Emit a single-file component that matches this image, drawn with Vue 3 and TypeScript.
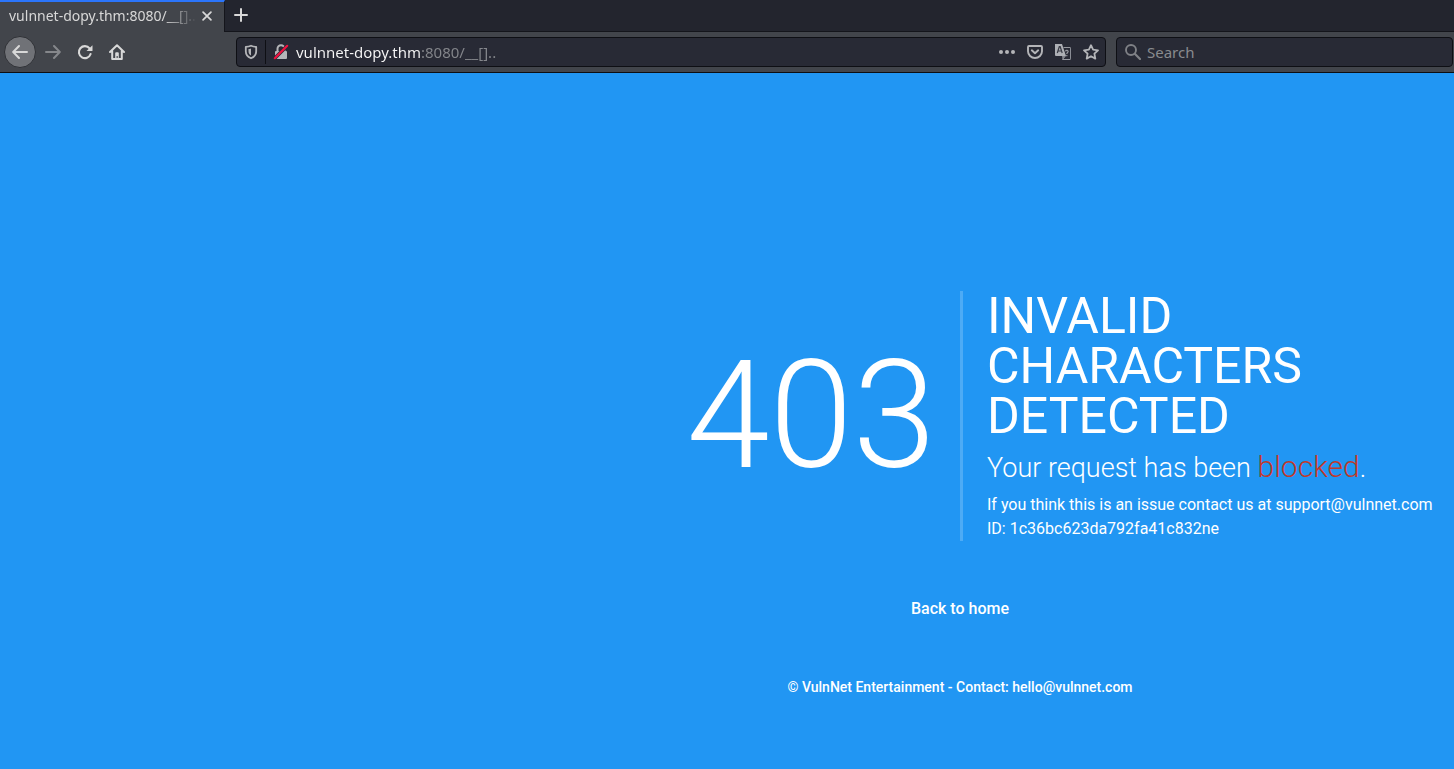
<script setup lang="ts">
import { ref } from 'vue'

const tabTitle = 'vulnnet-dopy.thm:8080/__[]..'
const address = ref('vulnnet-dopy.thm:8080/__[]..')
const query = ref('')
const requestId = '1c36bc623da792fa41c832ne'
</script>

<template>
  <div class="browser">
    <div class="tab-strip" role="tablist">
      <div class="tab" role="tab" aria-selected="true">
        <span class="tab-title">{{ tabTitle }}</span>
        <button class="tab-close" type="button" aria-label="Close tab">
          <svg width="14" height="14" viewBox="0 0 16 16"><path d="M3.500 3.500l9 9M12.500 3.500l-9 9" stroke="currentColor" stroke-width="2" stroke-linecap="round" /></svg>
        </button>
      </div>
      <button class="new-tab" type="button" aria-label="New tab">
        <svg width="16" height="16" viewBox="0 0 16 16"><path d="M8 2v12M2 8h12" stroke="currentColor" stroke-width="2" stroke-linecap="round" /></svg>
      </button>
    </div>

    <div class="toolbar">
      <nav class="nav-buttons" aria-label="Navigation">
        <button class="nav back" type="button" aria-label="Back">
          <svg width="16" height="16" viewBox="0 0 16 16"><path d="M15 8H1.500M7 2L1.200 8 7 14" fill="none" stroke="currentColor" stroke-width="2" stroke-linecap="round" stroke-linejoin="round" /></svg>
        </button>
        <button class="nav" type="button" aria-label="Forward" disabled>
          <svg width="16" height="16" viewBox="0 0 16 16"><path d="M1 8h13.500M9 2l5.800 6L9 14" fill="none" stroke="currentColor" stroke-width="2" stroke-linecap="round" stroke-linejoin="round" /></svg>
        </button>
        <button class="nav" type="button" aria-label="Reload">
          <svg width="16" height="16" viewBox="0 0 16 16"><path d="M12.600 4.400A6 6 0 1 0 13.600 10" fill="none" stroke="currentColor" stroke-width="2.100" stroke-linecap="round" /><path d="M15.500 1.200v5.300a.6.600 0 0 1-.6.600H9.500z" fill="currentColor" /></svg>
        </button>
        <button class="nav" type="button" aria-label="Home">
          <svg width="16" height="16" viewBox="0 0 16 16"><path d="M1 8l7-6.800L15 8M3.200 7v7.900h9.600V7" fill="none" stroke="currentColor" stroke-width="2" stroke-linecap="round" stroke-linejoin="round" /><path d="M6.200 15V9.200a1 1 0 0 1 1-1h1.600a1 1 0 0 1 1 1V15H8.700v-3H7.600v3z" fill="currentColor" /></svg>
        </button>
      </nav>

      <div class="field address">
        <button class="icon shield" type="button" aria-label="Tracking protection">
          <svg width="16" height="16" viewBox="0 0 16 16"><path d="M8 1.700c1.700.8 3.500 1.100 5.200 1.200v4.300c0 3.100-2 5.700-5.200 7.100-3.200-1.400-5.200-4-5.200-7.100V2.900C4.500 2.800 6.300 2.500 8 1.700z" fill="none" stroke="currentColor" stroke-width="1.800" stroke-linejoin="round" /><path d="M8 4.400v7.200C6.300 10.500 5.500 9 5.500 7V5.100C6.300 5 7.200 4.700 8 4.400z" fill="currentColor" /></svg>
        </button>
        <button class="icon lock" type="button" aria-label="Connection not secure">
          <svg width="16" height="16" viewBox="0 0 16 16"><path d="M4.500 8V4.800a3.500 3.500 0 0 1 7 0V8" fill="none" stroke="currentColor" stroke-width="2" /><rect x="2" y="7" width="12" height="8" rx="1" fill="currentColor" /><path d="M1.500 14.500l13-13" stroke="#282a35" stroke-width="3.600" /><path d="M1.800 14.200L14.200 1.800" stroke="#f2113f" stroke-width="2.200" stroke-linecap="round" /></svg>
        </button>
        <input v-model="address" class="url-input" type="text" aria-label="Address" spellcheck="false" />
        <div class="actions">
          <button class="icon" type="button" aria-label="Page actions">
            <svg width="16" height="16" viewBox="0 0 16 16" fill="currentColor"><circle cx="2" cy="8" r="2" /><circle cx="8" cy="8" r="2" /><circle cx="14" cy="8" r="2" /></svg>
          </button>
          <button class="icon" type="button" aria-label="Save to Pocket">
            <svg width="16" height="16" viewBox="0 0 16 16" fill="none" stroke="currentColor" stroke-width="1.900" stroke-linecap="round" stroke-linejoin="round"><path d="M2 2h12a1 1 0 0 1 1 1v4.200a7 6.800 0 0 1-14 0V3a1 1 0 0 1 1-1z" /><path d="M4.800 6.300L8 9.300l3.200-3" /></svg>
          </button>
          <button class="icon" type="button" aria-label="Translate page">
            <svg width="16" height="16" viewBox="0 0 16 16"><path d="M0 0h7l4 12H1a1 1 0 0 1-1-1z" fill="#aeb0b5" /><path d="M2.300 9l2-6.300h.9l2 6.300M3 7h3.500" fill="none" stroke="#393b45" stroke-width="1.200" /><path d="M8.500 3.500H15a.6.600 0 0 1 .6.600v10.800a.6.600 0 0 1-.6.600H7.500l2.800-3.500" fill="none" stroke="#96989f" stroke-width="1" /><path d="M7 12h3.600l-3 3.500z" fill="#85878e" /><path d="M10.500 7.300c.3-1.400 3-1 2.600.4-.2.800-1.300 1-1.300 2.300M11.800 11v1.200" fill="none" stroke="#96989f" stroke-width="1.200" /></svg>
          </button>
          <button class="icon" type="button" aria-label="Bookmark this page">
            <svg width="16" height="16" viewBox="0 0 16 16"><path d="M8 1.200l2.100 4.500 4.900.6-3.600 3.400.9 4.900L8 12.200l-4.300 2.400.9-4.900L1 6.300l4.900-.6z" fill="none" stroke="currentColor" stroke-width="1.800" stroke-linejoin="round" /></svg>
          </button>
        </div>
      </div>

      <label class="field search">
        <svg width="16" height="16" viewBox="0 0 16 16"><circle cx="6" cy="6" r="5" fill="none" stroke="currentColor" stroke-width="1.900" /><path d="M9.800 9.800L15 15" stroke="currentColor" stroke-width="2.200" stroke-linecap="round" /></svg>
        <input v-model="query" class="search-input" type="text" aria-label="Search" placeholder="Search" />
      </label>
    </div>

    <main class="page">
      <section class="error">
        <div class="code">403</div>
        <div class="details">
          <h1>Invalid<br />characters<br />detected</h1>
          <h2>Your request has been <span class="blocked">blocked</span>.</h2>
          <p>If you think this is an issue contact us at support@vulnnet.com</p>
          <p>ID: {{ requestId }}</p>
        </div>
      </section>
      <a class="home" href="#">Back to home</a>
      <footer>© VulnNet Entertainment - Contact: hello@vulnnet.com</footer>
    </main>
  </div>
</template>

<style>
body {
  margin: 0;
  background: #2196f3;
}
</style>

<style scoped>
.browser {
  min-height: 100vh;
  display: flex;
  flex-direction: column;
  font-family: "Noto Sans", sans-serif;
  font-size: 15px;
  overflow: hidden;
}
button {
  display: flex;
  align-items: center;
  justify-content: center;
  padding: 0;
  border: 0;
  background: none;
  color: inherit;
}
svg {
  display: block;
  flex: none;
}
input {
  flex: 1;
  min-width: 0;
  padding: 0;
  border: 0;
  outline: 0;
  background: none;
  font: inherit;
}
.tab-strip {
  display: flex;
  height: 32px;
  background: #23252e;
  box-shadow: inset 0 -1px #14151b;
  color: #d8d8d8;
}
.tab {
  box-sizing: border-box;
  width: 225px;
  display: flex;
  align-items: center;
  padding: 0 9px 2px;
  border-top: 2px solid #2b75fb;
  border-right: 1px solid #14151b;
  background: #42454b;
}
.tab-title {
  flex: 1;
  overflow: hidden;
  white-space: nowrap;
  font-size: 14px;
  line-height: 20px;
  mask-image: linear-gradient(to right, #000 155px, transparent 188px);
}
.tab-close {
  width: 16px;
  height: 16px;
  margin-left: 4px;
}
.new-tab {
  width: 32px;
  height: 30px;
}
.toolbar {
  box-sizing: border-box;
  height: 41px;
  display: flex;
  align-items: center;
  gap: 10px;
  padding: 0 1px 0 4px;
  background: #42454b;
  border-bottom: 1px solid #0d0e12;
  color: #d8d8d8;
}
.nav-buttons {
  display: flex;
  align-items: center;
  width: 222px;
}
.nav {
  width: 32px;
  height: 32px;
}
.nav:disabled {
  color: #85878b;
}
.back {
  box-sizing: border-box;
  margin-right: 1px;
  border: 1px solid #2f3136;
  border-radius: 50%;
  background: #707277;
}
.field {
  box-sizing: border-box;
  height: 30px;
  display: flex;
  align-items: center;
  border: 1px solid #0e0f14;
  border-radius: 4px;
  background: #282a35;
}
.address {
  flex: 856;
  padding: 0 6px;
  color: #b4b5b8;
}
.shield {
  width: 23px;
  height: 24px;
  padding-right: 6px;
  border-right: 1px solid #0e0f14;
}
.lock {
  width: 30px;
  height: 24px;
}
.url-input {
  background: linear-gradient(to right, #f8f8f8 124px, #85878c 124px) text;
  color: transparent;
  caret-color: #f8f8f8;
}
.actions {
  display: flex;
}
.icon {
  flex: none;
}
.actions .icon {
  width: 28px;
  height: 24px;
}
.actions .icon:last-child {
  width: 16px;
  margin-left: 6px;
}
.search {
  flex: 319;
  gap: 6px;
  padding: 0 8px;
  color: #7f8186;
}
.search-input {
  color: #f8f8f8;
}
.search-input::placeholder {
  color: #898b8f;
  opacity: 1;
}
.page {
  flex: 1;
  display: flex;
  flex-direction: column;
  align-items: center;
  padding: 218px 0 72px 466px;
  background: #2196f3;
  color: #fff;
  font-family: Roboto, sans-serif;
  font-size: 16px;
  line-height: 24px;
}
.error {
  align-self: stretch;
  display: grid;
  grid-template-columns: 1fr 1fr;
  align-items: center;
}
.code {
  padding-right: 24px;
  text-align: right;
  font-size: 150px;
  line-height: 150px;
  font-weight: 300;
}
.details {
  padding-left: 24px;
  border-left: 3px solid rgba(255, 255, 255, 0.2);
  white-space: nowrap;
}
h1,
h2,
p {
  margin: 0;
}
h1 {
  font-size: 50px;
  line-height: 50px;
  font-weight: 400;
  text-transform: uppercase;
}
h2 {
  margin: 8px 0 7px;
  font-size: 27px;
  line-height: 35px;
  font-weight: 300;
}
.blocked {
  font-size: 30px;
  color: #c0392b;
}
.home {
  margin-top: 56px;
  color: inherit;
  font-weight: 500;
  text-decoration: none;
}
footer {
  margin-top: 54px;
  font-size: 14px;
  font-weight: 500;
}
</style>
